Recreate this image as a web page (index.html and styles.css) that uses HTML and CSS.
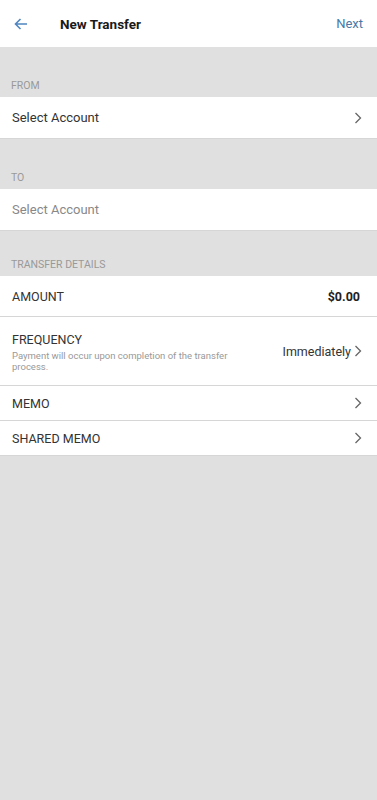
FILE: index.html
```html
<!DOCTYPE html>
<html lang="en">
<head>
    <meta charset="UTF-8">
    <meta name="viewport" content="width=device-width, initial-scale=1.0">
    <title>New Transfer</title>
    <link rel="stylesheet" href="styles.css">
</head>
<body>
    <header class="topbar">
        <span class="back">
            <svg width="14" height="12" viewBox="0 0 14 12"><path d="M13 6H1.5M6.5 1L1.5 6l5 5" fill="none" stroke="#4f86c0" stroke-width="1.6"/></svg>
        </span>
        <h1 class="title">New Transfer</h1>
        <span class="next">Next</span>
    </header>

    <div class="section-label first">FROM</div>
    <div class="row">
        <span class="label big">Select Account</span>
        <span class="chev"><svg width="8" height="12" viewBox="0 0 8 12"><path d="M1.5 1l5 5-5 5" fill="none" stroke="#666" stroke-width="1.3"/></svg></span>
    </div>

    <div class="section-label">TO</div>
    <div class="row">
        <span class="label big muted">Select Account</span>
    </div>

    <div class="section-label short">TRANSFER DETAILS</div>
    <div class="row amount">
        <span class="label">AMOUNT</span>
        <span class="value bold">$0.00</span>
    </div>
    <div class="row freq">
        <div class="freq-text">
            <span class="label">FREQUENCY</span>
            <p class="desc">Payment will occur upon completion of the transfer process.</p>
        </div>
        <span class="value">Immediately</span>
        <span class="chev"><svg width="8" height="12" viewBox="0 0 8 12"><path d="M1.5 1l5 5-5 5" fill="none" stroke="#666" stroke-width="1.3"/></svg></span>
    </div>
    <div class="row small">
        <span class="label">MEMO</span>
        <span class="chev"><svg width="8" height="12" viewBox="0 0 8 12"><path d="M1.5 1l5 5-5 5" fill="none" stroke="#666" stroke-width="1.3"/></svg></span>
    </div>
    <div class="row small">
        <span class="label">SHARED MEMO</span>
        <span class="chev"><svg width="8" height="12" viewBox="0 0 8 12"><path d="M1.5 1l5 5-5 5" fill="none" stroke="#666" stroke-width="1.3"/></svg></span>
    </div>
</body>
</html>
```

FILE: styles.css
```css
html,
body,
h1,
p {
    margin: 0;
    padding: 0;
}

body {
    background: #e0e0e0;
    font-family: Roboto, "Liberation Sans", Arial, sans-serif;
    color: #222;
    min-height: 800px;
}

.topbar {
    height: 47px;
    background: #fff;
    display: flex;
    align-items: center;
    padding: 0 14px 0 14px;
}
.back {display: flex; width: 46px;}
.title {font-size: 13.5px; font-weight: bold; color: #1a1a1a; flex: 1;}
.next {font-size: 13px; color: #4a78a6;}

.section-label {
    height: 50px;
    box-sizing: border-box;
    padding: 0 11px 5px;
    display: flex;
    align-items: flex-end;
    font-size: 10.5px;
    color: #999;
}
.section-label.short {height: 45px;}

.row {
    background: #fff;
    height: 42px;
    display: flex;
    align-items: center;
    padding: 0 15px 0 12px;
    border-bottom: 1px solid #d6d6d6;
    box-sizing: border-box;
}
.label {font-size: 12.5px; color: #333; flex: 1;}
.label.big {font-size: 13px;}
.muted {color: #888;}
.value {font-size: 12.5px; color: #333;}
.bold {font-weight: bold; color: #222; margin-right: 2px;}
.chev {display: flex; margin-left: 3px;}
.amount {height: 41px;}

.freq {height: 69px; align-items: center;}
.freq-text {flex: 1; display: flex; flex-direction: column; padding-top: 2px;}
.freq-text .label {flex: none;}
.desc {font-size: 9.5px; color: #999; width: 245px; line-height: 11px; margin-top: 3px;}

.small {height: 35px;}
```
